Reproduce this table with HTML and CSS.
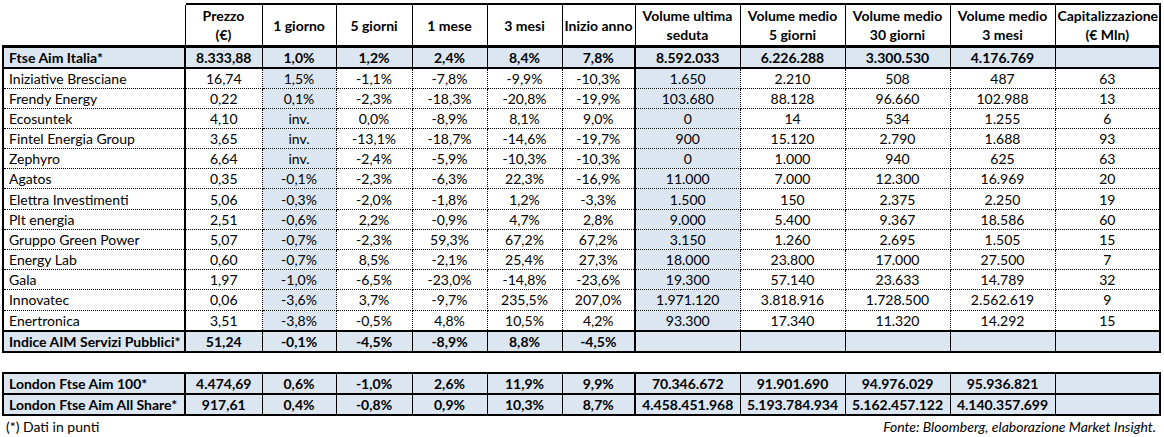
FILE: index.html
```html
<!DOCTYPE html>
<html lang="it">
<head>
<meta charset="utf-8">
<title>Ftse Aim Italia</title>
<link rel="stylesheet" href="styles.css">
</head>
<body>
<div class="page">
<table class="grid main">
  <colgroup>
    <col class="c-name"><col class="c-price"><col class="c-1g"><col class="c-5g"><col class="c-1m"><col class="c-3m"><col class="c-ia"><col class="c-vol"><col class="c-vol"><col class="c-vol"><col class="c-vol"><col class="c-cap">
  </colgroup>
  <thead>
    <tr class="head">
      <th class="blank"></th>
      <th>Prezzo<br>(€)</th>
      <th>1 giorno</th>
      <th>5 giorni</th>
      <th>1 mese</th>
      <th>3 mesi</th>
      <th>Inizio anno</th>
      <th>Volume ultima<br>seduta</th>
      <th>Volume medio<br>5 giorni</th>
      <th>Volume medio<br>30 giorni</th>
      <th>Volume medio<br>3 mesi</th>
      <th>Capitalizzazione<br>(€ Mln)</th>
    </tr>
  </thead>
  <tbody>
    <tr class="index">
      <td class="name">Ftse Aim Italia*</td><td>8.333,88</td><td>1,0%</td><td>1,2%</td><td>2,4%</td><td>8,4%</td><td>7,8%</td><td class="vu">8.592.033</td><td>6.226.288</td><td>3.300.530</td><td>4.176.769</td><td></td>
    </tr>
    <tr class="data"><td class="name">Iniziative Bresciane</td><td>16,74</td><td class="hl">1,5%</td><td>-1,1%</td><td>-7,8%</td><td>-9,9%</td><td>-10,3%</td><td class="vu hl">1.650</td><td>2.210</td><td>508</td><td>487</td><td>63</td></tr>
    <tr class="data"><td class="name">Frendy Energy</td><td>0,22</td><td class="hl">0,1%</td><td>-2,3%</td><td>-18,3%</td><td>-20,8%</td><td>-19,9%</td><td class="vu hl">103.680</td><td>88.128</td><td>96.660</td><td>102.988</td><td>13</td></tr>
    <tr class="data"><td class="name">Ecosuntek</td><td>4,10</td><td class="hl">inv.</td><td>0,0%</td><td>-8,9%</td><td>8,1%</td><td>9,0%</td><td class="vu hl">0</td><td>14</td><td>534</td><td>1.255</td><td>6</td></tr>
    <tr class="data"><td class="name">Fintel Energia Group</td><td>3,65</td><td class="hl">inv.</td><td>-13,1%</td><td>-18,7%</td><td>-14,6%</td><td>-19,7%</td><td class="vu hl">900</td><td>15.120</td><td>2.790</td><td>1.688</td><td>93</td></tr>
    <tr class="data"><td class="name">Zephyro</td><td>6,64</td><td class="hl">inv.</td><td>-2,4%</td><td>-5,9%</td><td>-10,3%</td><td>-10,3%</td><td class="vu hl">0</td><td>1.000</td><td>940</td><td>625</td><td>63</td></tr>
    <tr class="data"><td class="name">Agatos</td><td>0,35</td><td class="hl">-0,1%</td><td>-2,3%</td><td>-6,3%</td><td>22,3%</td><td>-16,9%</td><td class="vu hl">11.000</td><td>7.000</td><td>12.300</td><td>16.969</td><td>20</td></tr>
    <tr class="data"><td class="name">Elettra Investimenti</td><td>5,06</td><td class="hl">-0,3%</td><td>-2,0%</td><td>-1,8%</td><td>1,2%</td><td>-3,3%</td><td class="vu hl">1.500</td><td>150</td><td>2.375</td><td>2.250</td><td>19</td></tr>
    <tr class="data"><td class="name">Plt energia</td><td>2,51</td><td class="hl">-0,6%</td><td>2,2%</td><td>-0,9%</td><td>4,7%</td><td>2,8%</td><td class="vu hl">9.000</td><td>5.400</td><td>9.367</td><td>18.586</td><td>60</td></tr>
    <tr class="data"><td class="name">Gruppo Green Power</td><td>5,07</td><td class="hl">-0,7%</td><td>-2,3%</td><td>59,3%</td><td>67,2%</td><td>67,2%</td><td class="vu hl">3.150</td><td>1.260</td><td>2.695</td><td>1.505</td><td>15</td></tr>
    <tr class="data"><td class="name">Energy Lab</td><td>0,60</td><td class="hl">-0,7%</td><td>8,5%</td><td>-2,1%</td><td>25,4%</td><td>27,3%</td><td class="vu hl">18.000</td><td>23.800</td><td>17.000</td><td>27.500</td><td>7</td></tr>
    <tr class="data"><td class="name">Gala</td><td>1,97</td><td class="hl">-1,0%</td><td>-6,5%</td><td>-23,0%</td><td>-14,8%</td><td>-23,6%</td><td class="vu hl">19.300</td><td>57.140</td><td>23.633</td><td>14.789</td><td>32</td></tr>
    <tr class="data"><td class="name">Innovatec</td><td>0,06</td><td class="hl">-3,6%</td><td>3,7%</td><td>-9,7%</td><td>235,5%</td><td>207,0%</td><td class="vu hl">1.971.120</td><td>3.818.916</td><td>1.728.500</td><td>2.562.619</td><td>9</td></tr>
    <tr class="data"><td class="name">Enertronica</td><td>3,51</td><td class="hl">-3,8%</td><td>-0,5%</td><td>4,8%</td><td>10,5%</td><td>4,2%</td><td class="vu hl">93.300</td><td>17.340</td><td>11.320</td><td>14.292</td><td>15</td></tr>
    <tr class="index">
      <td class="name">Indice AIM Servizi Pubblici*</td><td>51,24</td><td>-0,1%</td><td>-4,5%</td><td>-8,9%</td><td>8,8%</td><td>-4,5%</td><td class="vu"></td><td></td><td></td><td></td><td></td>
    </tr>
  </tbody>
</table>

<table class="grid london">
  <colgroup>
    <col class="c-name"><col class="c-price"><col class="c-1g"><col class="c-5g"><col class="c-1m"><col class="c-3m"><col class="c-ia"><col class="c-vol"><col class="c-vol"><col class="c-vol"><col class="c-vol"><col class="c-cap">
  </colgroup>
  <tbody>
    <tr class="index">
      <td class="name">London Ftse Aim 100*</td><td>4.474,69</td><td>0,6%</td><td>-1,0%</td><td>2,6%</td><td>11,9%</td><td>9,9%</td><td class="vu">70.346.672</td><td>91.901.690</td><td>94.976.029</td><td>95.936.821</td><td></td>
    </tr>
    <tr class="index">
      <td class="name">London Ftse Aim All Share*</td><td>917,61</td><td>0,4%</td><td>-0,8%</td><td>0,9%</td><td>10,3%</td><td>8,7%</td><td class="vu">4.458.451.968</td><td>5.193.784.934</td><td>5.162.457.122</td><td>4.140.357.699</td><td></td>
    </tr>
  </tbody>
</table>

<div class="notes">
  <span class="note">(*) Dati in punti</span>
  <span class="source">Fonte: Bloomberg, elaborazione Market Insight.</span>
</div>
</div>
</body>
</html>
```

FILE: styles.css
```css
html, body {
  margin: 0;
  padding: 0;
  background: #ffffff;
}

body {
  font-family: Lato, "Open Sans", "Liberation Sans", sans-serif;
  font-size: 14px;
  color: #000;
}

.page {
  padding: 3px 0 0 2px;
  width: 1160px;
}

.grid {
  border-collapse: collapse;
  table-layout: fixed;
  width: 1158px;
  border: 2px solid #000;
}

.c-name { width: 182px; }
.c-price { width: 77px; }
.c-1g { width: 74px; }
.c-5g { width: 76px; }
.c-1m { width: 75px; }
.c-3m { width: 75px; }
.c-ia { width: 73px; }
.c-vol { width: 105px; }
.c-cap { width: 105px; }

.grid th,
.grid td {
  padding: 0 2px;
  text-align: center;
  white-space: nowrap;
  overflow: hidden;
  line-height: 18px;
}

.head {
  height: 42px;
}

.head th {
  font-weight: bold;
  border-left: 1px solid #000;
  border-right: 1px solid #000;
  border-bottom: 3px solid #000;
  line-height: 19px;
  padding-top: 1px;
}

.head th.blank {
  border-top: 2px solid #fff;
  border-left: 2px solid #fff;
}

.main {
  border-top: none;
  border-left: none;
}

.main .head th:not(.blank) {
  border-top: 2px solid #000;
}

.main tbody {
  border-left: 2px solid #000;
}

tr.index {
  height: 21px;
}

.index td {
  font-weight: bold;
  background: #dce6f1;
  border: 1px solid #000;
  border-top: 2px solid #000;
  border-bottom: 2px solid #000;
  padding-top: 1px;
}

.grid td.name {
  text-align: left;
  padding-left: 5px;
  border-right: 2px solid #000;
  border-left: 2px solid #000;
}

tr.data {
  height: 20.2px;
}

.data td {
  border: 1px dotted #000;
  padding-top: 1px;
}

.data td.name {
  border-right: 2px solid #000;
  border-left: 2px solid #000;
}

.grid td.vu {
  border-left: 2px solid #000;
}

.data td.hl {
  background: #dce6f1;
}

.london {
  margin-top: 19px;
}

.notes {
  display: flex;
  justify-content: space-between;
  width: 1150px;
  padding: 2px 0 0 4px;
  font-size: 14px;
  line-height: 18px;
}

.source {
  font-style: italic;
}
```
